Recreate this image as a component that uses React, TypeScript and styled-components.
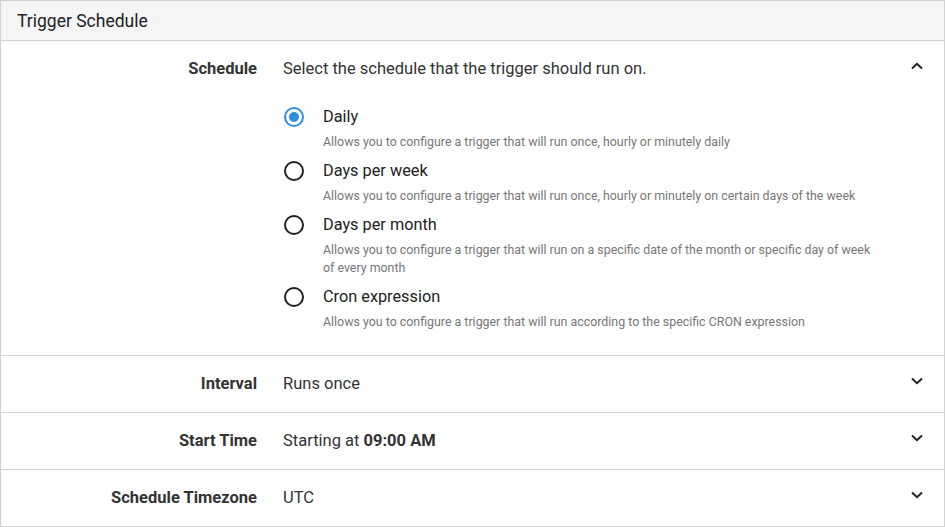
import styled, { createGlobalStyle } from 'styled-components';

const GlobalStyle = createGlobalStyle`
  body {
    margin: 0;
    background: #ffffff;
    font-family: Roboto, 'Liberation Sans', sans-serif;
    color: #333333;
  }
`;

const Panel = styled.section`
  width: 943px;
  border: 1px solid #d2d2d2;
  background: #ffffff;
`;

const PanelHeader = styled.header`
  height: 39px;
  display: flex;
  align-items: center;
  padding-left: 16px;
  background: #f5f5f5;
  border-bottom: 1px solid #d2d2d2;
  font-size: 17.5px;
  color: #1f2229;
`;

const Row = styled.div<{ $open?: boolean }>`
  display: grid;
  grid-template-columns: 256px 1fr 40px;
  column-gap: 26px;
  align-items: ${(p) => (p.$open ? 'start' : 'center')};
  min-height: 56px;
  padding: ${(p) => (p.$open ? '16px 0 24px' : '0')};
  border-bottom: 1px solid #d2d2d2;
  &:last-child {
    border-bottom: none;
  }
`;

const Label = styled.div`
  text-align: right;
  font-size: 16.5px;
  font-weight: 700;
  line-height: 24px;
  color: #333333;
`;

const Value = styled.div`
  font-size: 16.5px;
  line-height: 24px;
  color: #333333;
  strong {
    font-weight: 700;
  }
`;

const Toggle = styled.div`
  height: 24px;
  box-sizing: border-box;
  padding: 0 0 6px 7px;
  display: flex;
  align-items: center;
  color: #222222;
`;

const Options = styled.div`
  display: flex;
  flex-direction: column;
  gap: 8px;
  margin-top: 24px;
`;

const Option = styled.label`
  display: grid;
  grid-template-columns: 20px 1fr;
  column-gap: 20px;
  cursor: pointer;
`;

const Radio = styled.span<{ $checked?: boolean }>`
  width: 20px;
  height: 20px;
  margin: 2px 0 0 1px;
  box-sizing: border-box;
  border-radius: 50%;
  border: 2px solid ${(p) => (p.$checked ? '#2f8ee0' : '#222222')};
  display: flex;
  align-items: center;
  justify-content: center;
  &::after {
    content: '';
    width: 10px;
    height: 10px;
    border-radius: 50%;
    background: ${(p) => (p.$checked ? '#2f8ee0' : 'transparent')};
  }
`;

const OptionTitle = styled.div`
  font-size: 16.3px;
  line-height: 24px;
  color: #222222;
`;

const OptionHint = styled.div`
  margin-top: 4px;
  font-size: 12.4px;
  line-height: 18px;
  color: #777777;
`;

const Chevron = ({ up }: { up?: boolean }) => (
  <svg width="12" height="8" viewBox="0 0 12 8" fill="none">
    <path
      d={up ? 'M1 6.5 L6 1.8 L11 6.5' : 'M1 1.5 L6 6.2 L11 1.5'}
      stroke="currentColor"
      strokeWidth="2"
    />
  </svg>
);

const options = [
  {
    title: 'Daily',
    hint: 'Allows you to configure a trigger that will run once, hourly or minutely daily',
    checked: true,
  },
  {
    title: 'Days per week',
    hint: 'Allows you to configure a trigger that will run once, hourly or minutely on certain days of the week',
  },
  {
    title: 'Days per month',
    hint: 'Allows you to configure a trigger that will run on a specific date of the month or specific day of week of every month',
  },
  {
    title: 'Cron expression',
    hint: 'Allows you to configure a trigger that will run according to the specific CRON expression',
  },
];

export default function App() {
  return (
    <>
      <GlobalStyle />
      <Panel>
        <PanelHeader>Trigger Schedule</PanelHeader>
        <Row $open>
          <Label>Schedule</Label>
          <Value>
            Select the schedule that the trigger should run on.
            <Options>
              {options.map((o) => (
                <Option key={o.title}>
                  <Radio $checked={o.checked} />
                  <div>
                    <OptionTitle>{o.title}</OptionTitle>
                    <OptionHint>{o.hint}</OptionHint>
                  </div>
                </Option>
              ))}
            </Options>
          </Value>
          <Toggle>
            <Chevron up />
          </Toggle>
        </Row>
        <Row>
          <Label>Interval</Label>
          <Value>Runs once</Value>
          <Toggle>
            <Chevron />
          </Toggle>
        </Row>
        <Row>
          <Label>Start Time</Label>
          <Value>
            Starting at <strong>09:00 AM</strong>
          </Value>
          <Toggle>
            <Chevron />
          </Toggle>
        </Row>
        <Row>
          <Label>Schedule Timezone</Label>
          <Value>UTC</Value>
          <Toggle>
            <Chevron />
          </Toggle>
        </Row>
      </Panel>
    </>
  );
}
